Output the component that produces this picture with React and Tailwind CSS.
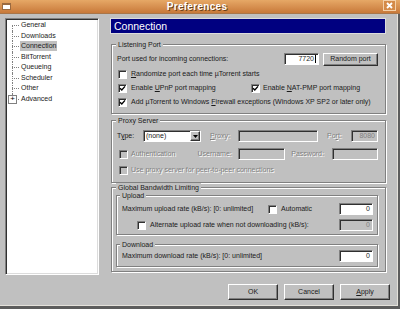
import React from "react";

const SUNKEN =
  "border border-t-[#808080] border-l-[#808080] border-r-white border-b-white shadow-[inset_1px_1px_0_#303030]";
const RAISED =
  "border border-t-white border-l-white border-r-[#303030] border-b-[#303030] shadow-[inset_-1px_-1px_0_#808080]";
const ETCHED =
  "relative border border-[#808080] shadow-[inset_1px_1px_0_#ffffff,1px_1px_0_#ffffff]";
const DIS = "text-[#808080] [text-shadow:1px_1px_0_#ffffff]";

const TREE = ["General", "Downloads", "Connection", "BitTorrent", "Queueing", "Scheduler", "Other", "Advanced"];

function Check({ checked, disabled }) {
  return (
    <span
      className={`${SUNKEN} flex items-center justify-center w-[9px] h-[9px] shrink-0 ${
        disabled ? "bg-[#c0c0c0]" : "bg-white"
      }`}
    >
      {checked && (
        <svg width="7" height="7" viewBox="0 0 7 7">
          <path d="M1 3.2 L2.8 5 L6 1.4" fill="none" stroke="#000" strokeWidth="1.4" />
        </svg>
      )}
    </span>
  );
}

function Field({ className = "", value, disabled }) {
  return (
    <div
      className={`${SUNKEN} h-[12px] flex items-center justify-end pr-[2px] shrink-0 ${
        disabled ? "bg-[#c0c0c0] text-[#808080]" : "bg-white"
      } ${className}`}
    >
      {value}
    </div>
  );
}

function Group({ label, className = "", legendClass = "left-[4px]", children }) {
  return (
    <div className={`${ETCHED} ${className}`}>
      <span className={`absolute -top-[5px] ${legendClass} bg-[#c0c0c0] px-[2px] leading-[9px]`}>{label}</span>
      {children}
    </div>
  );
}

function Btn({ children }) {
  return (
    <button className={`${RAISED} w-[50px] h-[16px] bg-[#c0c0c0] text-[7px] text-[#1a1a1a]`}>{children}</button>
  );
}

function TreeRow({ label, index }) {
  const first = index === 0;
  const last = index === TREE.length - 1;
  return (
    <div className="flex items-center h-[10.5px]">
      <span className="relative w-[13px] h-full shrink-0">
        <span
          className={
            first
              ? "absolute left-[5px] top-1/2 bottom-0 border-l border-dotted border-[#808080]"
              : last
              ? "absolute left-[5px] top-0 h-1/2 border-l border-dotted border-[#808080]"
              : "absolute left-[5px] top-0 bottom-0 border-l border-dotted border-[#808080]"
          }
        />
        <span className="absolute left-[5px] top-1/2 w-[7px] border-t border-dotted border-[#808080]" />
        {last && (
          <span className="absolute left-[1px] top-[1px] w-[9px] h-[9px] bg-white border border-[#808080] flex items-center justify-center text-[8px] leading-none text-black">
            +
          </span>
        )}
      </span>
      <span className={label === "Connection" ? "bg-[#c0c0c0] px-[1px] ml-[0px] leading-[10px]" : "px-[1px] leading-[10px]"}>
        {label}
      </span>
    </div>
  );
}

export default function App() {
  return (
    <div className="w-[400px] h-[309px] bg-[#5c5c5c] overflow-hidden font-['Liberation_Sans',Arial,sans-serif] text-[7px] text-[#1a1a1a]">
      {/* title bar */}
      <div className="h-[14px] flex items-center bg-gradient-to-b from-[#e6a866] to-[#c8793a] border-b border-[#a8764a] relative">
        <span className="ml-[2px] w-[9px] h-[7px] bg-white border border-[#9a6a40] border-t-2" />
        <span className="flex-1 text-center text-white font-bold text-[10px] leading-none tracking-[0.3px] [text-shadow:1px_1px_0_#6a3f18]">
          Preferences
        </span>
        <span className="mr-[4px] w-[13px] h-[11px] -mt-[2px] border border-[#f4d0a8] bg-[#d48a48] flex items-center justify-center">
          <svg width="7" height="7" viewBox="0 0 7 7">
            <path d="M1 1 L6 6 M6 1 L1 6" stroke="#fff" strokeWidth="1.8" />
          </svg>
        </span>
      </div>

      {/* body */}
      <div className="w-[398px] h-[292px] bg-[#c0c0c0] border-r border-b border-[#e4e1da] flex pt-[4px] pl-[5px]">
        {/* tree */}
        <div className="w-[94px] h-[257px] bg-white border border-t-[#808080] border-l-[#808080] border-r-white border-b-white shadow-[inset_1px_1px_0_#303030,inset_-1px_-1px_0_#dcdcdc] pt-[1px] pl-[1px]">
          {TREE.map((t, i) => (
            <TreeRow key={t} label={t} index={i} />
          ))}
        </div>

        {/* right */}
        <div className="ml-[11px] w-[280px] flex flex-col">
          <div className="w-[276px] h-[16px] bg-[#000080] border border-[#dcdcdc] flex items-center pl-[3px] text-white text-[10.5px] leading-none">
            Connection
          </div>

          {/* Listening Port */}
          <Group label="Listening Port" className="mt-[10px] ml-[1px] w-[275px] pt-[8px] pb-[4px] pl-[5px] pr-[7px]">
            <div className="flex items-center h-[12px]">
              <span>Port used for incoming connections:</span>
              <Field className="ml-auto w-[35px]" value={<>7720<span className="w-px h-[8px] bg-black ml-px" /></>} />
              <button className={`${RAISED} ml-[4px] w-[55px] h-[13px] bg-[#c0c0c0] text-[7px]`}>Random port</button>
            </div>
            <div className="mt-[2px] flex items-center h-[14px] pl-[1px]">
              <Check />
              <span className="ml-[4px]">
                <u>R</u>andomize port each time µTorrent starts
              </span>
            </div>
            <div className="flex items-center h-[14px] pl-[1px]">
              <span className="flex items-center w-[133px]">
                <Check checked />
                <span className="ml-[4px]">
                  Enable <u>U</u>PnP port mapping
                </span>
              </span>
              <Check checked />
              <span className="ml-[3px]">
                Enable <u>N</u>AT-PMP port mapping
              </span>
            </div>
            <div className="flex items-center h-[14px] pl-[1px]">
              <Check checked />
              <span className="ml-[4px]">
                Add µTorrent to Windows <u>F</u>irewall exceptions (Windows XP SP2 or later only)
              </span>
            </div>
          </Group>

          {/* Proxy Server */}
          <Group label="Proxy Server" className="mt-[6px] ml-[1px] w-[275px] pt-[9px] pb-[6px] pl-[5px] pr-[7px]">
            <div className="flex items-center h-[12px]">
              <span className="w-[26px]">
                T<u>y</u>pe:
              </span>
              <div className={`${SUNKEN} w-[58px] h-[12px] bg-white flex items-center pl-[2px]`}>
                <span className="flex-1">(none)</span>
                <span className={`${RAISED} w-[10px] h-[10px] bg-[#c0c0c0] flex items-center justify-center`}>
                  <svg width="5" height="3" viewBox="0 0 5 3">
                    <path d="M0 0 H5 L2.5 3 Z" fill="#000" />
                  </svg>
                </span>
              </div>
              <span className={`${DIS} ml-[9px] w-[28px]`}>
                <u>P</u>roxy:
              </span>
              <Field className="w-[80px]" disabled />
              <span className={`${DIS} ml-[9px] w-[24px]`}>
                Po<u>r</u>t:
              </span>
              <Field className="w-[27px]" value="8080" disabled />
            </div>
            <div className="mt-[6px] flex items-center h-[12px] pl-[2px]">
              <Check disabled />
              <span className={`${DIS} ml-[3px] w-[67px]`}>Authentication</span>
              <span className={`${DIS} w-[41px]`}>Username:</span>
              <Field className="w-[47px]" disabled />
              <span className={`${DIS} ml-[6px] w-[41px]`}>Password:</span>
              <Field className="w-[46px]" disabled />
            </div>
            <div className="mt-[4px] flex items-center h-[12px] pl-[2px]">
              <Check disabled />
              <span className={`${DIS} ml-[3px]`}>Use proxy server for peer-to-peer connections</span>
            </div>
          </Group>

          {/* Global Bandwidth Limiting */}
          <Group
            label="Global Bandwidth Limiting"
            className="mt-[4px] ml-[1px] w-[275px] pt-[7px] pb-[4px] pl-[4px] pr-[7px]"
          >
            <Group label="Upload" legendClass="left-[3px]" className="pt-[7px] pb-[3px] pl-[5px] pr-[4px]">
              <div className="flex items-center h-[12px]">
                <span className="w-[146px]">Maximum upload rate (kB/s): [0: unlimited]</span>
                <Check />
                <span className="ml-[4px]">Automatic</span>
                <Field className="ml-auto w-[34px]" value="0" />
              </div>
              <div className="mt-[4px] flex items-center h-[12px] pl-[15px]">
                <Check />
                <span className="ml-[4px]">Alternate upload rate when not downloading (kB/s):</span>
                <Field className="ml-auto w-[34px]" value="0" disabled />
              </div>
            </Group>
            <Group label="Download" legendClass="left-[3px]" className="mt-[9px] pt-[5px] pb-[4px] pl-[5px] pr-[4px]">
              <div className="flex items-center h-[12px]">
                <span>Maximum download rate (kB/s): [0: unlimited]</span>
                <Field className="ml-auto w-[34px]" value="0" />
              </div>
            </Group>
          </Group>

          <div className="mt-[12px] flex justify-end gap-[6px]">
            <Btn>OK</Btn>
            <Btn>Cancel</Btn>
            <Btn>
              <u>A</u>pply
            </Btn>
          </div>
        </div>
      </div>
    </div>
  );
}
